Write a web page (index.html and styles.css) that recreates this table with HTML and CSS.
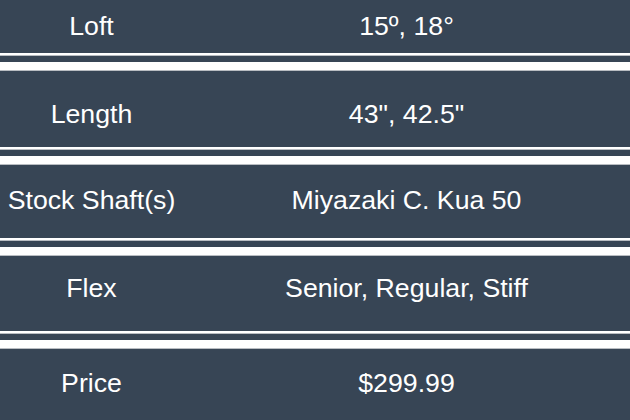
FILE: index.html
```html
<!DOCTYPE html>
<html lang="en">
<head>
<meta charset="utf-8">
<title>Specs</title>
<link rel="stylesheet" href="styles.css">
</head>
<body>
<div class="specs">
  <div class="row row-1"><div class="label">Loft</div><div class="value">15º, 18°</div></div>
  <div class="sep"><div class="thin"></div><div class="thick"></div></div>
  <div class="row row-2"><div class="label">Length</div><div class="value">43", 42.5"</div></div>
  <div class="sep"><div class="thin"></div><div class="thick"></div></div>
  <div class="row row-3"><div class="label">Stock Shaft(s)</div><div class="value">Miyazaki C. Kua 50</div></div>
  <div class="sep"><div class="thin"></div><div class="thick"></div></div>
  <div class="row row-4"><div class="label">Flex</div><div class="value">Senior, Regular, Stiff</div></div>
  <div class="sep"><div class="thin"></div><div class="thick"></div></div>
  <div class="row row-5"><div class="label">Price</div><div class="value">$299.99</div></div>
</div>
</body>
</html>
```

FILE: styles.css
```css
html, body {
  margin: 0;
  padding: 0;
  background: #374555;
}
.specs {
  width: 630px;
  height: 420px;
  background: #374555;
  color: #ffffff;
  font-family: "Liberation Sans", Arial, sans-serif;
  font-size: 26.7px;
  line-height: 28px;
  display: flex;
  flex-direction: column;
}
.row {
  display: grid;
  grid-template-columns: 183px 1fr;
  align-items: start;
  box-sizing: border-box;
}
.label, .value {
  text-align: center;
  white-space: nowrap;
}
.row-1 { height: 53px; padding-top: 12px; }
.row-2 { height: 76px; padding-top: 29px; }
.row-3 { height: 73px; padding-top: 21px; }
.row-4 { height: 75px; padding-top: 18px; }
.row-5 { height: 71px; padding-top: 20px; }
.sep {
  display: flex;
  flex-direction: column;
  gap: 6px;
}
.thin {
  height: 2px;
  background: #ffffff;
  border-bottom: 1px solid #b9bdc2;
}
.thick {
  height: 8px;
  background: #ffffff;
  border-bottom: 1px solid #b9bdc2;
}
```
